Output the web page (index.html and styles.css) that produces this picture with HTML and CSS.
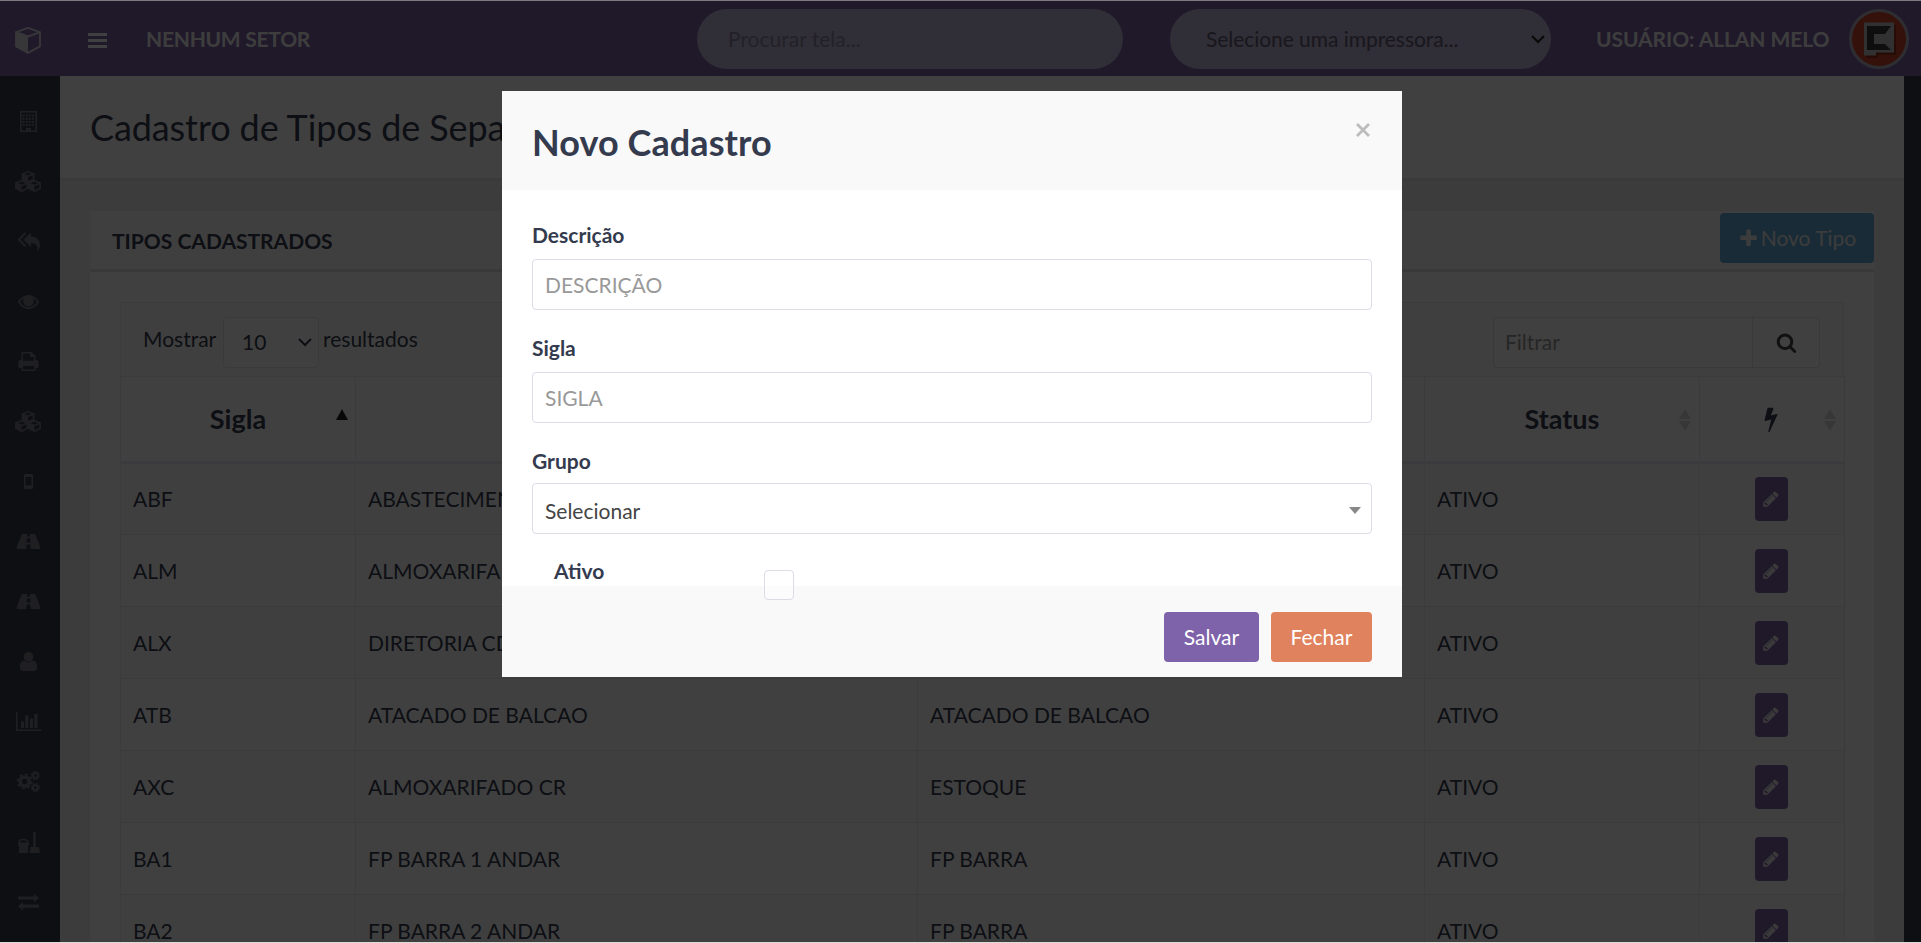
FILE: index.html
```html
<!DOCTYPE html>
<html lang="pt-BR">
<head>
<meta charset="utf-8">
<title>Cadastro de Tipos de Separação</title>
<link rel="stylesheet" href="styles.css">
</head>
<body>
<svg class="defs" width="0" height="0">
  <symbol id="cubes" viewBox="0 0 30 30"><g fill="none" stroke="currentColor" stroke-width="1.6" stroke-linejoin="round"><path d="M15 5.8l5.6 2.2v5.4L15 15.800l-5.600-2.400V8zM9.400 8L15 10.300 20.600 8M8.600 14.800l5.700 2.300v5.300l-5.700 2.800-5.700-2.800v-5.300zM2.900 17.100l5.700 2.300 5.700-2.300M21.400 14.800l5.700 2.300v5.300l-5.700 2.800-5.700-2.800v-5.300zM15.700 17.100l5.700 2.300 5.700-2.300"/></g><path fill="currentColor" d="M9.400 8L15 10.300v5.500l-5.600-2.400zM2.900 17.100l5.700 2.300v5.800l-5.700-2.800zM15.700 17.100l5.700 2.300v5.800l-5.700-2.800z"/></symbol>
  <symbol id="road" viewBox="0 0 30 30"><path fill="currentColor" fill-rule="evenodd" d="M9.500 8h4.700l-.2 2.600h3L16.800 8h4.700q.7 0 1 .7l4.700 12.200q.7 2.100-.7 2.100h-8.700l-.4-4.500h-3.800l-.4 4.500H4.500q-1.400 0-.7-2.100L8.500 8.700q.3-.7 1-.7zm4.300 4.600l-.3 4h4l-.3-4z"/></symbol>
  <symbol id="pencil" viewBox="0 0 1792 1792"><path fill="currentColor" d="M491 1536l91-91-235-235-91 91v107h128v128h107zm523-928q0-22-22-22-10 0-17 7l-542 542q-7 7-7 17 0 22 22 22 10 0 17-7l542-542q7-7 7-17zm-54-192l416 416-832 832H128v-416zm683 96q0 53-37 90l-166 166-416-416 166-165q36-38 90-38 53 0 91 38l235 234q37 39 37 91z"/></symbol>
  <symbol id="sort" viewBox="0 0 12 22"><path fill="currentColor" d="M6 0l6 10H0zM0 12h12L6 22z"/></symbol>
  <symbol id="chevron" viewBox="0 0 14 9"><path fill="none" stroke="currentColor" stroke-width="2" d="M1 1l6 6 6-6"/></symbol>
</svg>

<div class="app">
  <header class="navbar">
    <svg class="brand" viewBox="0 0 28 28"><path fill="none" stroke="currentColor" stroke-width="1.900" stroke-linejoin="round" d="M14 1.800l12 4.300v14.300l-12 6.400-12-6.400V6.100zM2 6.100l12 4.400 12-4.400"/><path fill="currentColor" d="M2 6.100l12 4.400v16.300L2 20.400z"/></svg>
    <svg class="bars" viewBox="0 0 19 15"><path fill="currentColor" d="M0 0h19v3H0zM0 6h19v3H0zM0 12h19v3H0z"/></svg>
    <strong class="sector">NENHUM SETOR</strong>
    <div class="pill pill-search">Procurar tela...</div>
    <div class="pill pill-printer"><span>Selecione uma impressora...</span><svg class="chev" viewBox="0 0 14 9"><use href="#chevron"/></svg></div>
    <strong class="user">USUÁRIO: ALLAN MELO</strong>
    <svg class="avatar" viewBox="0 0 60 60"><circle cx="30" cy="30" r="28.500" fill="#cf4528" stroke="#b9b3c4" stroke-width="3"/><path d="M17 16h30v30H29v3H17z" fill="#992f18"/><path d="M15 13.500h30v30H27v3H15z" fill="#c4c4c4"/><path d="M18 17h24l-6 8H25v10h11l6 6H18z" fill="#3a3a3a"/></svg>
  </header>

  <div class="shell">
    <nav class="sidebar">
      <a><svg viewBox="0 0 30 30"><path fill="currentColor" fill-rule="evenodd" d="M7 5h17v21H7zm1.600 1.600v17.800h4.400V22h5v2.400h4.400V6.600z"/><path stroke="currentColor" stroke-width="2" stroke-dasharray="2 1.100" d="M9.500 9.500h12.200M9.500 12.700h12.200M9.500 15.900h12.200M9.500 19.100h12.200"/></svg></a>
      <a><svg><use href="#cubes"/></svg></a>
      <a><svg viewBox="0 0 30 30"><path fill="currentColor" d="M18 6.500v4q9 .5 9 8.500 0 2.500-1.800 5.500-.5.500-.6-.2.800-7.300-6.600-7.300v4L10.500 13.800z"/><path fill="none" stroke="currentColor" stroke-width="2" d="M12.500 7L6 13.700l6.500 6.700"/></svg></a>
      <a><svg viewBox="0 0 30 30"><path fill="none" stroke="currentColor" stroke-width="1.700" d="M5.800 16Q10 9.800 15.500 9.800T25.200 16q-4.200 6.200-9.700 6.200T5.800 16z"/><circle cx="15.500" cy="15" r="5.400" fill="currentColor"/></svg></a>
      <a><svg viewBox="0 0 30 30"><path fill="currentColor" fill-rule="evenodd" d="M8.500 6h10l4 4v4h1q2 0 2 2v6h-3v3h-14v-3h-3v-6q0-2 2-2h1zm1.500 1.500v7.300h11V11h-4V7.500zm0 12.500v3.500h11V20z"/></svg></a>
      <a><svg><use href="#cubes"/></svg></a>
      <a><svg viewBox="0 0 30 30"><path fill="currentColor" fill-rule="evenodd" d="M12.500 8h6q1.500 0 1.500 1.500v12q0 1.500-1.500 1.500h-6Q11 23 11 21.500v-12Q11 8 12.500 8zm0 3v8.500h6V11z"/></svg></a>
      <a><svg><use href="#road"/></svg></a>
      <a><svg><use href="#road"/></svg></a>
      <a><svg viewBox="0 0 30 30"><circle cx="15.500" cy="10.800" r="4.800" fill="currentColor"/><path fill="currentColor" d="M11 14.500q4.500 3.500 9 0 4 .3 4 7 0 3.500-3 3.500H10q-3 0-3-3.500 0-6.700 4-7z"/></svg></a>
      <a><svg viewBox="0 0 30 30"><path fill="currentColor" d="M3 6h1.600v17.400H28V25H3zM8 15.500h3V22H8zM12.200 9.500h3.200V22h-3.200zM17 12.500h3V22h-3zM21.300 8h3.200v14h-3.200z"/></svg></a>
      <a><svg viewBox="0 0 30 30"><g fill="none" stroke="currentColor"><circle cx="11.700" cy="15.500" r="4.500" stroke-width="3.600"/><circle cx="11.700" cy="15.500" r="7" stroke-width="1.800" stroke-dasharray="2.800 2.700"/><circle cx="22.300" cy="9.500" r="2.500" stroke-width="2"/><circle cx="22.300" cy="9.500" r="4" stroke-width="1.200" stroke-dasharray="1.800 1.340"/><circle cx="22.300" cy="21.500" r="2.500" stroke-width="2"/><circle cx="22.300" cy="21.500" r="4" stroke-width="1.200" stroke-dasharray="1.800 1.340"/></g></svg></a>
      <a><svg viewBox="0 0 30 30"><path fill="currentColor" d="M5 16.500h11v3h-1V27H6v-7.500H5zM20.300 6h2.400v15H26l1 6H16.500l1-6h2.800z"/><path fill="none" stroke="currentColor" stroke-width="1.400" d="M6 17q0-3.500 4.500-3.500T15 17"/></svg></a>
      <a><svg viewBox="0 0 30 30"><path fill="currentColor" d="M5 10.500h16V8l5 4-5 4v-2.500H5zM26 18.500H10V16l-5 4.200 5 4.300v-2.700h16z"/></svg></a>
    </nav>

    <main class="content">
      <div class="page-head"><h1>Cadastro de Tipos de Separação</h1></div>
      <section class="panel">
        <div class="panel-head"><h2>TIPOS CADASTRADOS</h2>
          <button class="btn btn-info"><svg viewBox="0 0 1792 1792"><path fill="currentColor" d="M1600 736v192q0 40-28 68t-68 28h-416v416q0 40-28 68t-68 28H800q-40 0-68-28t-28-68v-416H288q-40 0-68-28t-28-68V736q0-40 28-68t68-28h416V224q0-40 28-68t68-28h192q40 0 68 28t28 68v416h416q40 0 68 28t28 68z"/></svg>Novo Tipo</button>
        </div>
        <div class="panel-body">
          <div class="toolbar">
            <span>Mostrar</span>
            <div class="length">10<svg class="chev" viewBox="0 0 14 9"><use href="#chevron"/></svg></div>
            <span>resultados</span>
            <div class="filter"><span class="filter-text">Filtrar</span><span class="filter-btn"><svg viewBox="0 0 1792 1792"><path fill="currentColor" d="M1216 832q0-185-131.500-316.500T768 384 451.500 515.500 320 832t131.500 316.500T768 1280t316.500-131.500T1216 832zm512 832q0 52-38 90t-90 38q-54 0-90-38l-343-342q-179 124-399 124-143 0-273.500-55.500t-225-150-150-225T64 832t55.500-273.500 150-225 225-150T768 128t273.500 55.500 225 150 150 225T1472 832q0 220-124 399l343 343q37 37 37 90z"/></svg></span></div>
          </div>
          <table class="grid">
            <colgroup><col class="c1"><col class="c2"><col class="c3"><col class="c4"><col class="c5"></colgroup>
            <thead><tr>
              <th>Sigla<svg class="sort asc" viewBox="0 0 12 22"><path fill="currentColor" d="M6 0l6 11H0z"/></svg></th>
              <th></th>
              <th></th>
              <th>Status<svg class="sort"><use href="#sort"/></svg></th>
              <th><svg class="bolt" viewBox="0 0 1792 1792"><path fill="currentColor" d="M1333 566q18 20 7 44l-540 1157q-13 25-42 25-4 0-14-2-17-5-25.500-19t-4.500-30l197-808-406 101q-4 1-12 1-18 0-31-11-18-15-13-39l201-825q4-14 16-23t28-9h328q19 0 32 12.500t13 29.500q0 8-5 18l-171 463 396-98q8-2 12-2 19 0 34 15z"/></svg><svg class="sort"><use href="#sort"/></svg></th>
            </tr></thead>
            <tbody>
              <tr><td>ABF</td><td>ABASTECIMENTO</td><td></td><td>ATIVO</td><td><span class="edit"><svg><use href="#pencil"/></svg></span></td></tr>
              <tr><td>ALM</td><td>ALMOXARIFADO</td><td></td><td>ATIVO</td><td><span class="edit"><svg><use href="#pencil"/></svg></span></td></tr>
              <tr><td>ALX</td><td>DIRETORIA CD</td><td></td><td>ATIVO</td><td><span class="edit"><svg><use href="#pencil"/></svg></span></td></tr>
              <tr><td>ATB</td><td>ATACADO DE BALCAO</td><td>ATACADO DE BALCAO</td><td>ATIVO</td><td><span class="edit"><svg><use href="#pencil"/></svg></span></td></tr>
              <tr><td>AXC</td><td>ALMOXARIFADO CR</td><td>ESTOQUE</td><td>ATIVO</td><td><span class="edit"><svg><use href="#pencil"/></svg></span></td></tr>
              <tr><td>BA1</td><td>FP BARRA 1 ANDAR</td><td>FP BARRA</td><td>ATIVO</td><td><span class="edit"><svg><use href="#pencil"/></svg></span></td></tr>
              <tr><td>BA2</td><td>FP BARRA 2 ANDAR</td><td>FP BARRA</td><td>ATIVO</td><td><span class="edit"><svg><use href="#pencil"/></svg></span></td></tr>
            </tbody>
          </table>
        </div>
      </section>
    </main>
  </div>
</div>

<div class="backdrop">
  <div class="modal">
    <div class="modal-head"><h3>Novo Cadastro</h3><svg class="close" viewBox="0 0 14 14"><path fill="none" stroke="currentColor" stroke-width="2.800" d="M1 1l12 12M13 1L1 13"/></svg></div>
    <div class="modal-body">
      <label>Descrição</label>
      <div class="input">DESCRIÇÃO</div>
      <label>Sigla</label>
      <div class="input">SIGLA</div>
      <label class="tight">Grupo</label>
      <div class="input select">Selecionar<i class="caret"></i></div>
      <div class="check-row"><label>Ativo</label><span class="check"></span></div>
    </div>
    <div class="modal-foot"><button class="btn btn-primary">Salvar</button><button class="btn btn-warn">Fechar</button></div>
  </div>
</div>
<div class="edge"></div>
</body>
</html>
```
FILE: styles.css
```css
* { box-sizing: border-box; }
body {
  margin: 0;
  height: 943px;
  overflow: hidden;
  font: 21px/30px Lato, "Liberation Sans", sans-serif;
  color: #373d4f;
  background: #363c4b;
}
h1, h2, h3 { margin: 0; }
.defs { position: absolute; }
svg { display: block; flex: none; }
button { font: inherit; border: 0; }

.app { height: 943px; overflow: hidden; padding-top: 1px; }

.navbar {
  display: flex;
  align-items: center;
  height: 75px;
  background: #7f63a8;
  color: #fff;
}
.brand { width: 28px; height: 28px; margin-left: 14px; margin-top: 2px; color: #dad5e0; }
.bars { width: 19px; height: 15px; margin-left: 46px; margin-top: 3px; }
.sector { margin-left: 39px; width: 551px; color: #f4f4f4; white-space: nowrap; letter-spacing: -.27px; }
.pill {
  display: flex;
  align-items: center;
  height: 60px;
  margin-top: 1px;
  border-radius: 30px;
  background: #c0b6d6;
  white-space: nowrap;
}
.pill-search { width: 426px; padding-left: 31px; color: #8d84a0; }
.pill-printer { width: 381px; margin-left: 47px; padding: 0 6px 0 36px; justify-content: space-between; color: #635c75; }
.pill-printer span { letter-spacing: -.05px; }
.pill-printer .chev { color: #222; }
.chev { width: 14px; height: 9px; }
.user { margin-left: 45px; width: 253px; color: #f4f4f4; white-space: nowrap; letter-spacing: -.08px; }
.avatar { width: 60px; height: 60px; margin-top: 1px; }

.shell { display: flex; height: 900px; }
.sidebar { width: 60px; padding-top: 15px; background: #383d4d; color: #7c7c88; flex: none; }
.sidebar a { display: flex; align-items: center; justify-content: center; width: 56px; height: 60px; }
.sidebar svg { width: 30px; height: 30px; }

.content { width: 1844px; background: #ededf3; flex: none; }
.page-head { height: 105px; padding: 28px 30px 0; background: #fff; border-bottom: 3px solid #e6e6ea; }
.page-head h1 { width: 412px; overflow: hidden; font-size: 36px; line-height: 46px; font-weight: 400; letter-spacing: -.1px; white-space: nowrap; }

.panel { margin: 30px 30px 0; background: #fff; }
.panel-head {
  display: flex;
  justify-content: space-between;
  height: 61px;
  padding: 2px 0 0 22px;
  background: #f9f9f9;
  border-bottom: 3px solid #e4e4e6;
}
.panel-head h2 { font-size: 21px; line-height: 56px; font-weight: 700; }
.btn { height: 50px; border-radius: 4px; color: #fff; display: flex; align-items: center; justify-content: center; padding: 0; white-space: nowrap; }
.btn-info { width: 154px; gap: 2px; background: #65aad6; color: #eee; }
.btn-info svg { width: 21px; height: 21px; }
.panel-body { padding: 30px 30px 0; }

.toolbar {
  display: flex;
  align-items: flex-start;
  height: 74px;
  padding: 14px 23px 0 22px;
  background: #f9f9f9;
  border: 1px solid #eaeaee;
  border-bottom: 0;
}
.toolbar > span { padding-top: 7px; }
.toolbar > span:first-child { width: 80px; }
.length {
  display: flex;
  align-items: center;
  justify-content: space-between;
  width: 96px;
  height: 51px;
  padding: 0 6px 1px 18px;
  margin-right: 4px;
  border: 1px solid #e6e6ec;
  border-radius: 4px;
  background: #fff;
}
.filter { display: flex; width: 327px; height: 51px; margin-left: auto; border: 1px solid #e2e2e8; border-radius: 4px; background: #fff; }
.filter-text { flex: 1; padding: 9px 11px; color: #999; }
.filter-btn { width: 67px; border-left: 1px solid #e2e2e8; display: flex; align-items: center; justify-content: center; color: #444; }
.filter-btn svg { width: 21px; height: 21px; }

.grid { width: 1724px; table-layout: fixed; border-collapse: collapse; background: #fff; }
.c1 { width: 235px; }
.c2 { width: 562px; }
.c3 { width: 507px; }
.c4 { width: 275px; }
.c5 { width: 145px; }
.grid th, .grid td { border: 1px solid #ebebf1; padding: 0 12px; }
.grid th { position: relative; height: 86px; font-size: 27px; font-weight: 700; border-bottom: 3px solid #ebebf1; }
.grid td { height: 72px; text-align: left; }
.grid tbody tr:nth-child(odd) { background: #f9f9f9; }
.grid th:last-child, .grid td:last-child { padding-right: 14px; }
.sort { position: absolute; right: 8px; top: 32px; width: 12px; height: 22px; color: #dcdce0; }
.sort.asc { right: 7px; color: #222; }
.bolt { width: 26px; height: 26px; margin: 0 auto; }
.edit { display: flex; align-items: center; justify-content: center; width: 33px; height: 44px; margin: 0 auto; border-radius: 4px; background: #7f63a8; color: #e6e6e6; }
.edit svg { width: 18px; height: 18px; }

.backdrop {
  position: fixed;
  inset: 0;
  display: flex;
  align-items: flex-start;
  background: rgba(0, 0, 0, .75);
}
.modal { width: 900px; margin: 91px 0 0 502px; background: #fff; color: #353b4e; }
.modal-head { display: flex; justify-content: space-between; height: 99px; padding: 30px 32px 0 30px; background: #f9f9f9; }
.modal-head h3 { font-size: 36px; line-height: 42px; font-weight: 700; letter-spacing: .08px; }
.close { width: 14px; height: 14px; margin-top: 2px; color: #bcbcbc; }
.modal-body { height: 396px; padding: 30px 30px 0; }
.modal-body label { display: block; height: 39px; line-height: 30px; font-weight: 700; }
.input { height: 51px; margin-bottom: 23px; padding: 10px 12px; line-height: 30px; border: 1px solid #dcdce8; border-radius: 4px; color: #999; }
.modal-body label.tight { height: 37px; line-height: 29px; }
.select { display: flex; justify-content: space-between; align-items: center; color: #444; margin-bottom: 21px; padding: 13px 10px 9px 12px; }
.caret { border: 6px solid transparent; border-top: 7px solid #888; border-bottom: 0; }
.check-row { display: flex; padding-left: 22px; }
.check-row label { width: 210px; line-height: 32px; }
.check { position: relative; width: 30px; height: 30px; margin-top: 15px; border: 1px solid #dcdce8; border-radius: 4px; background: rgba(255, 255, 255, .5); }
.modal-foot { display: flex; justify-content: flex-end; gap: 12px; height: 91px; padding: 26px 30px 0; background: #f9f9f9; }
.btn-primary { width: 95px; background: #7e62aa; }
.btn-warn { width: 101px; background: #df825d; }

.edge { position: fixed; inset: 0; border-top: 1px solid #7b7b80; border-bottom: 1px solid #dedcd8; pointer-events: none; }
```
